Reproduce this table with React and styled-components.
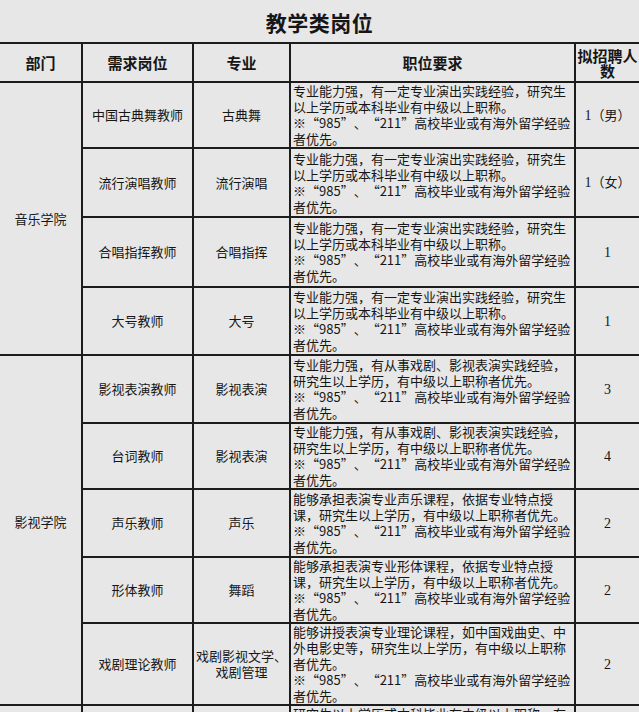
import React from "react";
import styled, { createGlobalStyle } from "styled-components";

const Global = createGlobalStyle`
  html, body { margin: 0; padding: 0; background: #e7e7e7; }
  body { font-family: "Noto Sans CJK SC", "Noto Sans", sans-serif; color: #161616; }
`;

const Page = styled.div`
  width: 639px;
  height: 712px;
  overflow: hidden;
  background: #e7e7e7;
`;

const Title = styled.h1`
  margin: 0;
  height: 42px;
  line-height: 44px;
  text-align: center;
  font-size: 21px;
  font-weight: 700;
  letter-spacing: 0.5px;
`;

const Table = styled.table`
  width: 639px;
  table-layout: fixed;
  border-collapse: collapse;
  font-size: 13px;
`;

const Row = styled.tr`
  height: ${(p) => p.$h}px;
`;

const Head = styled.th`
  border: 2px solid #1c1c1c;
  font-size: 15px;
  font-weight: 700;
  line-height: 15px;
  padding: 0;
  text-align: center;
  vertical-align: middle;
  white-space: nowrap;
  &:first-child { border-left: none; }
  &:last-child { border-right: none; }
`;

const Cell = styled.td`
  border: 2px solid #1c1c1c;
  padding: 0 0 ${(p) => p.$pb || 0}px 0;
  line-height: 16px;
  text-align: center;
  vertical-align: ${(p) => (p.$top ? "top" : "middle")};
  white-space: nowrap;
  &:first-child { border-left: none; }
  &:last-child { border-right: none; }
`;

const DeptCell = styled(Cell)`
  border-left: none;
`;

const ReqCell = styled(Cell)`
  text-align: left;
  padding: 0 0 0 2px;
`;

const Line = styled.div`
  display: block;
`;

/* full-width punctuation box, as in the Song-typeface original */
const Q = styled.span`
  display: inline-block;
  width: 13px;
  text-align: ${(p) => p.$align || "center"};
`;

const Num = styled.span`
  font-family: "Liberation Serif", "Noto Sans CJK SC", serif;
  font-size: 14px;
`;

const PRE = "专业能力强，有一定专业演出实践经验，研究生";
const EDU = "以上学历或本科毕业有中级以上职称。";
const STAR = "STAR";
const END = "者优先。";

const StarLine = () => (
  <Line>
    <Q>※</Q>
    <Q $align="right">“</Q>985<Q $align="left">”</Q>
    <Q $align="left">、</Q>
    <Q $align="right">“</Q>211<Q $align="left">”</Q>
    高校毕业或有海外留学经验
  </Line>
);

const rows = [
  { dept: "音乐学院", span: 4, h: 66, pos: "中国古典舞教师", major: ["古典舞"], req: [PRE, EDU, STAR, END], n: "1", extra: "（男）" },
  { h: 69, pos: "流行演唱教师", major: ["流行演唱"], req: [PRE, EDU, STAR, END], n: "1", extra: "（女）" },
  { h: 70, pos: "合唱指挥教师", major: ["合唱指挥"], req: [PRE, EDU, STAR, END], n: "1" },
  { h: 68, pos: "大号教师", major: ["大号"], req: [PRE, EDU, STAR, END], n: "1" },
  { dept: "影视学院", span: 5, pb: 16, h: 68, pos: "影视表演教师", major: ["影视表演"], req: ["专业能力强，有从事戏剧、影视表演实践经验，", "研究生以上学历，有中级以上职称者优先。", STAR, END], n: "3" },
  { h: 66, pos: "台词教师", major: ["影视表演"], req: ["专业能力强，有从事戏剧、影视表演实践经验，", "研究生以上学历，有中级以上职称者优先。", STAR, END], n: "4" },
  { h: 68, pos: "声乐教师", major: ["声乐"], req: ["能够承担表演专业声乐课程，依据专业特点授", "课，研究生以上学历，有中级以上职称者优先。", STAR, END], n: "2" },
  { h: 66, pos: "形体教师", major: ["舞蹈"], req: ["能够承担表演专业形体课程，依据专业特点授", "课，研究生以上学历，有中级以上职称者优先。", STAR, END], n: "2" },
  { h: 82, pos: "戏剧理论教师", major: ["戏剧影视文学、", "戏剧管理"], req: ["能够讲授表演专业理论课程，如中国戏曲史、中", "外电影史等，研究生以上学历，有中级以上职称", "者优先。", STAR, END], n: "2" },
];

export default function App() {
  return (
    <Page>
      <Global />
      <Title>教学类岗位</Title>
      <Table>
        <colgroup>
          <col style={{ width: 82 }} />
          <col style={{ width: 111 }} />
          <col style={{ width: 97 }} />
          <col style={{ width: 285 }} />
          <col style={{ width: 64 }} />
        </colgroup>
        <tbody>
          <Row $h={39}>
            <Head>部门</Head>
            <Head>需求岗位</Head>
            <Head>专业</Head>
            <Head>职位要求</Head>
            <Head>拟招聘人<br />数</Head>
          </Row>
          {rows.map((r, i) => (
            <Row key={i} $h={r.h}>
              {r.dept && (
                <DeptCell rowSpan={r.span} $pb={r.pb}>{r.dept}</DeptCell>
              )}
              <Cell>{r.pos}</Cell>
              <Cell>
                {r.major.map((m, j) => (
                  <Line key={j}>{m}</Line>
                ))}
              </Cell>
              <ReqCell>
                {r.req.map((t, j) =>
                  t === STAR ? <StarLine key={j} /> : <Line key={j}>{t}</Line>
                )}
              </ReqCell>
              <Cell>
                <Num>{r.n}</Num>
                {r.extra}
              </Cell>
            </Row>
          ))}
          <Row $h={40}>
            <DeptCell $top> </DeptCell>
            <Cell $top> </Cell>
            <Cell $top> </Cell>
            <ReqCell $top>
              <Line>研究生以上学历或本科毕业有中级以上职称，有</Line>
            </ReqCell>
            <Cell $top> </Cell>
          </Row>
        </tbody>
      </Table>
    </Page>
  );
}
